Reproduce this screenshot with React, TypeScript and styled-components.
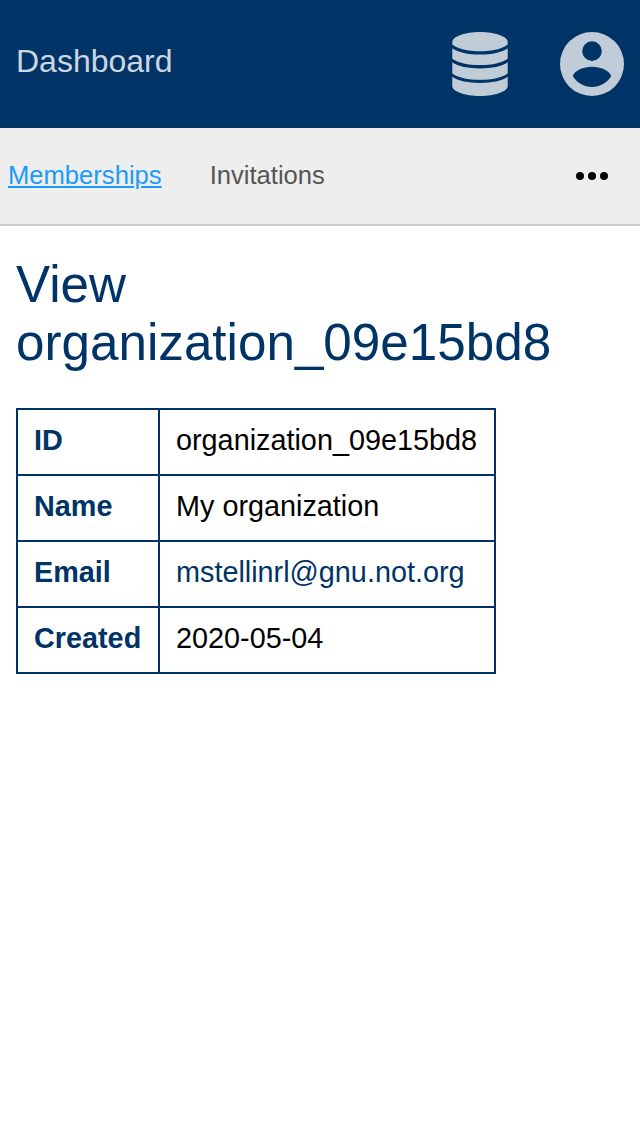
import React from "react";
import styled, { createGlobalStyle } from "styled-components";

const GlobalStyle = createGlobalStyle`
  body {
    margin: 0;
    background: #fff;
    color: #000;
    font-family: "Liberation Sans", Arial, sans-serif;
  }
`;

const Header = styled.header`
  box-sizing: border-box;
  display: flex;
  align-items: center;
  height: 128px;
  padding: 0 16px;
  background: #003366;
  color: #c1ccd9;
`;

const Brand = styled.div`
  flex: 1;
  color: #ccd6e0;
  font-size: 32px;
  line-height: 36px;
  padding-bottom: 6px;
`;

const HeaderIcons = styled.div`
  display: flex;
  align-items: center;
  gap: 48px;
`;

const HeaderIcon = styled.svg`
  display: block;
  width: 64px;
  height: 64px;
  fill: currentColor;
`;

const Nav = styled.nav`
  box-sizing: border-box;
  display: flex;
  align-items: center;
  gap: 48px;
  height: 98px;
  padding: 0 32px 0 8px;
  border-bottom: 2px solid #ccc;
  background: #eee;
`;

const Tab = styled.a<{ $active?: boolean }>`
  padding-bottom: 2px;
  font-size: 25.6px;
  line-height: 30px;
  color: ${(p) => (p.$active ? "#1a9bfc" : "#555")};
  text-decoration: ${(p) => (p.$active ? "underline" : "none")};
  text-decoration-thickness: 2px;
  text-underline-offset: 2px;
`;

const More = styled.svg`
  display: block;
  width: 32px;
  height: 8px;
  margin-left: auto;
`;

const Main = styled.main`
  padding: 30px 16px;
`;

const Title = styled.h1`
  margin: 0 0 36px;
  color: #003366;
  font-size: 51.2px;
  font-weight: 400;
  line-height: 58px;
`;

const Table = styled.table`
  width: 480px;
  border-collapse: collapse;
  table-layout: fixed;
  font-size: 28.8px;
  line-height: 32px;
`;

const cell = `
  padding: 14px 16px 18px;
  border: 2px solid #003366;
  text-align: left;
`;

const Label = styled.th`
  ${cell}
  box-sizing: border-box;
  width: 142px;
  padding-right: 8px;
  color: #003366;
`;

const Value = styled.td`
  ${cell}
`;

const EmailLink = styled.a`
  color: #003366;
`;

export default function App() {
  return (
    <>
      <GlobalStyle />
      <Header>
        <Brand>Dashboard</Brand>
        <HeaderIcons>
          <HeaderIcon viewBox="0 0 64 64">
            <path d="M32 0C47 0 59.7 4.5 59.7 10V12.500C55 16.800 44 19.300 32 19.300S9 16.800 4.300 12.500V10C4.300 4.500 17 0 32 0Z" />
            <path d="M4.300 16.200C10 20.300 20 22.500 32 22.500S54 20.300 59.700 16.200V26.700C54 30.900 44 33 32 33S10 30.900 4.300 26.700Z" />
            <path d="M4.300 30.300C10 34.400 20 36.500 32 36.500S54 34.400 59.700 30.300V41.500C54 45.700 44 47.800 32 47.800S10 45.700 4.300 41.500Z" />
            <path d="M4.300 44.800C10 48.900 20 51 32 51S54 48.900 59.700 44.800V54C59.700 59.500 47 64 32 64S4.300 59.500 4.300 54Z" />
          </HeaderIcon>
          <HeaderIcon viewBox="0 0 64 64">
            <path
              fillRule="evenodd"
              d="M32 0A32 32 0 1 1 32 64A32 32 0 1 1 32 0ZM32 9.300A9.800 9.800 0 1 0 32 28.900A9.800 9.800 0 1 0 32 9.300ZM12.800 44.100C17 51 24 55.100 32 55.100S47 51 51.200 44.100C49.500 38.500 40.500 34.800 32 34.800S14.500 38.500 12.800 44.100Z"
            />
          </HeaderIcon>
        </HeaderIcons>
      </Header>
      <Nav>
        <Tab $active>Memberships</Tab>
        <Tab>Invitations</Tab>
        <More viewBox="0 0 32 8">
          <circle cx="4" cy="4" r="4" />
          <circle cx="16" cy="4" r="4" />
          <circle cx="28" cy="4" r="4" />
        </More>
      </Nav>
      <Main>
        <Title>
          View
          <br />
          organization_09e15bd8
        </Title>
        <Table>
          <tbody>
            <tr>
              <Label>ID</Label>
              <Value>organization_09e15bd8</Value>
            </tr>
            <tr>
              <Label>Name</Label>
              <Value>My organization</Value>
            </tr>
            <tr>
              <Label>Email</Label>
              <Value>
                <EmailLink>mstellinrl@gnu.not.org</EmailLink>
              </Value>
            </tr>
            <tr>
              <Label>Created</Label>
              <Value>2020-05-04</Value>
            </tr>
          </tbody>
        </Table>
      </Main>
    </>
  );
}
